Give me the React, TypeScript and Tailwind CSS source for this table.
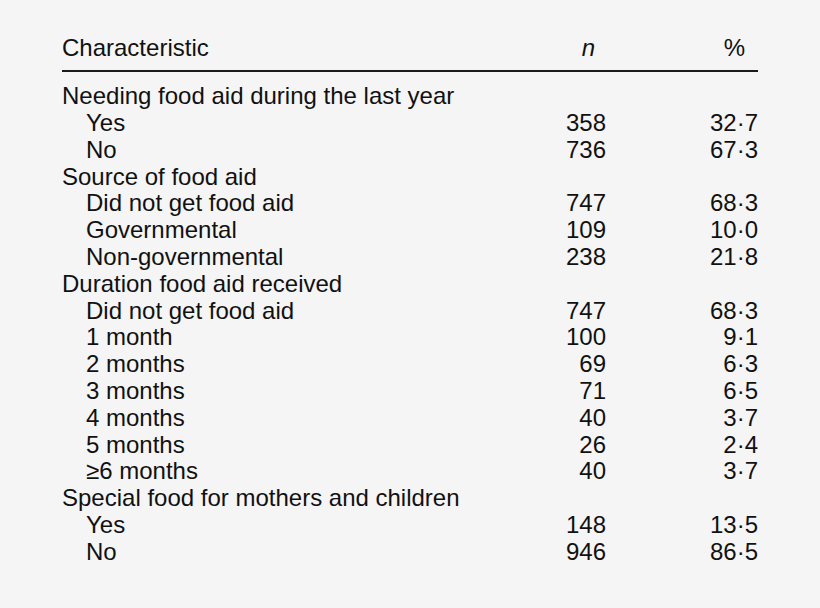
const rows: { label: string; n?: string; pct?: string; sub?: boolean }[] = [
  { label: 'Needing food aid during the last year' },
  { label: 'Yes', n: '358', pct: '32·7', sub: true },
  { label: 'No', n: '736', pct: '67·3', sub: true },
  { label: 'Source of food aid' },
  { label: 'Did not get food aid', n: '747', pct: '68·3', sub: true },
  { label: 'Governmental', n: '109', pct: '10·0', sub: true },
  { label: 'Non-governmental', n: '238', pct: '21·8', sub: true },
  { label: 'Duration food aid received' },
  { label: 'Did not get food aid', n: '747', pct: '68·3', sub: true },
  { label: '1 month', n: '100', pct: '9·1', sub: true },
  { label: '2 months', n: '69', pct: '6·3', sub: true },
  { label: '3 months', n: '71', pct: '6·5', sub: true },
  { label: '4 months', n: '40', pct: '3·7', sub: true },
  { label: '5 months', n: '26', pct: '2·4', sub: true },
  { label: '≥6 months', n: '40', pct: '3·7', sub: true },
  { label: 'Special food for mothers and children' },
  { label: 'Yes', n: '148', pct: '13·5', sub: true },
  { label: 'No', n: '946', pct: '86·5', sub: true },
]

export default function App() {
  return (
    <div className="w-[820px] h-[608px] bg-[#f5f5f5] pt-[35px] pl-[62px] text-[#111] font-['Liberation_Sans',Arial,sans-serif] text-[24px] leading-[26.8px]">
      <div className="w-[696px]">
        {/* header */}
        <div className="grid grid-cols-[1fr_60px_152px] pb-2 border-b-2 border-[#1a1a1a]">
          <div>Characteristic</div>
          <div className="text-right pr-[11px] italic">n</div>
          <div className="text-right pr-[13px]">%</div>
        </div>

        <div className="mt-[11.5px]">
          {rows.map((r, i) => (
            <div key={i} className="grid grid-cols-[1fr_60px_152px]">
              <div className={r.sub ? 'pl-6' : ''}>{r.label}</div>
              <div className="text-right">{r.n}</div>
              <div className="text-right">{r.pct}</div>
            </div>
          ))}
        </div>
      </div>
    </div>
  )
}
